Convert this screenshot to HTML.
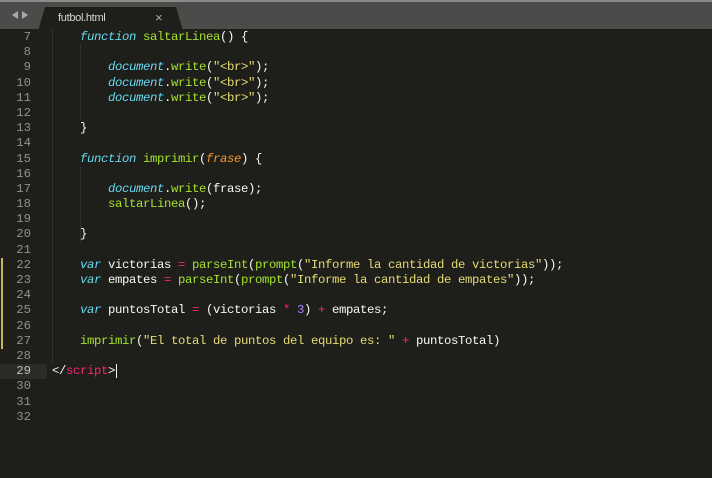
<!DOCTYPE html>
<html><head><style>
body{margin:0;width:712px;height:478px;background:#1e1f1b;overflow:hidden;font-family:"Liberation Mono",monospace;}
#bar{position:absolute;left:0;top:0;width:712px;height:29px;background:#4b4b49;border-top:2px solid #8a8a88;box-sizing:border-box;}
#tab{position:absolute;left:38px;top:5px;width:145px;height:24px;background:#1e1f1b;clip-path:polygon(7px 0,138px 0,145px 24px,0 24px);}
#tab span{position:absolute;left:20px;top:5px;font:11px "Liberation Sans",sans-serif;color:#d8d8d8;letter-spacing:-0.3px}
#tab b{position:absolute;left:117px;top:3px;font:13px "Liberation Sans",sans-serif;color:#aaa;font-weight:normal}
.arr{position:absolute;top:9px;width:0;height:0;border-top:4px solid transparent;border-bottom:4px solid transparent}
#code{position:absolute;left:0;top:30px;font-size:12.3px;letter-spacing:-0.38px;line-height:15.2px;color:#f8f8f2}
.l{height:15.2px;position:relative;white-space:pre}
.n{display:inline-block;width:31px;text-align:right;color:#8f908a;margin-right:21px;letter-spacing:0}
.k{color:#66d9ef;font-style:italic}.f{color:#a6e22e}.s{color:#e6db74}.o{color:#f92672}.m{color:#ae81ff}.p{color:#fd971f;font-style:italic}
.mod::before{content:"";position:absolute;left:1px;top:0;width:2px;height:15.2px;background:#c7b95a}
.cur .n{color:#bbb}
.cur::after{content:"";position:absolute;left:0;top:0;width:47px;height:15.2px;background:rgba(255,255,255,0.06)}
.g{position:absolute;width:0;border-left:1px dotted #444}
</style></head><body>
<div id="bar">
<div class="arr" style="left:12px;border-right:6px solid #aaa"></div>
<div class="arr" style="left:22px;border-left:6px solid #aaa"></div>
<div id="tab"><span>futbol.html</span><b>×</b></div>
</div>
<div class="g" style="left:52px;top:29px;height:335px"></div>
<div class="g" style="left:80px;top:45px;height:75px"></div>
<div class="g" style="left:80px;top:167px;height:75px"></div>
<div id="code">
<div class="l"><span class="n">7</span>    <span class="k">function</span> <span class="f">saltarLinea</span>() {</div>
<div class="l"><span class="n">8</span></div>
<div class="l"><span class="n">9</span>        <span class="k">document</span>.<span class="f">write</span>(<span class="s">"&lt;br&gt;"</span>);</div>
<div class="l"><span class="n">10</span>        <span class="k">document</span>.<span class="f">write</span>(<span class="s">"&lt;br&gt;"</span>);</div>
<div class="l"><span class="n">11</span>        <span class="k">document</span>.<span class="f">write</span>(<span class="s">"&lt;br&gt;"</span>);</div>
<div class="l"><span class="n">12</span></div>
<div class="l"><span class="n">13</span>    }</div>
<div class="l"><span class="n">14</span></div>
<div class="l"><span class="n">15</span>    <span class="k">function</span> <span class="f">imprimir</span>(<span class="p">frase</span>) {</div>
<div class="l"><span class="n">16</span></div>
<div class="l"><span class="n">17</span>        <span class="k">document</span>.<span class="f">write</span>(frase);</div>
<div class="l"><span class="n">18</span>        <span class="f">saltarLinea</span>();</div>
<div class="l"><span class="n">19</span></div>
<div class="l"><span class="n">20</span>    }</div>
<div class="l"><span class="n">21</span></div>
<div class="l mod"><span class="n">22</span>    <span class="k">var</span> victorias <span class="o">=</span> <span class="f">parseInt</span>(<span class="f">prompt</span>(<span class="s">"Informe la cantidad de victorias"</span>));</div>
<div class="l mod"><span class="n">23</span>    <span class="k">var</span> empates <span class="o">=</span> <span class="f">parseInt</span>(<span class="f">prompt</span>(<span class="s">"Informe la cantidad de empates"</span>));</div>
<div class="l mod"><span class="n">24</span></div>
<div class="l mod"><span class="n">25</span>    <span class="k">var</span> puntosTotal <span class="o">=</span> (victorias <span class="o">*</span> <span class="m">3</span>) <span class="o">+</span> empates;</div>
<div class="l mod"><span class="n">26</span></div>
<div class="l mod"><span class="n">27</span>    <span class="f">imprimir</span>(<span class="s">"El total de puntos del equipo es: "</span> <span class="o">+</span> puntosTotal)</div>
<div class="l"><span class="n">28</span></div>
<div class="l cur"><span class="n">29</span>&lt;/<span class="o">script</span>&gt;<span style="border-left:1.5px solid #f8f8f2;margin-left:1px"></span></div>
<div class="l"><span class="n">30</span></div>
<div class="l"><span class="n">31</span></div>
<div class="l"><span class="n">32</span></div>
</div>
</body></html>
